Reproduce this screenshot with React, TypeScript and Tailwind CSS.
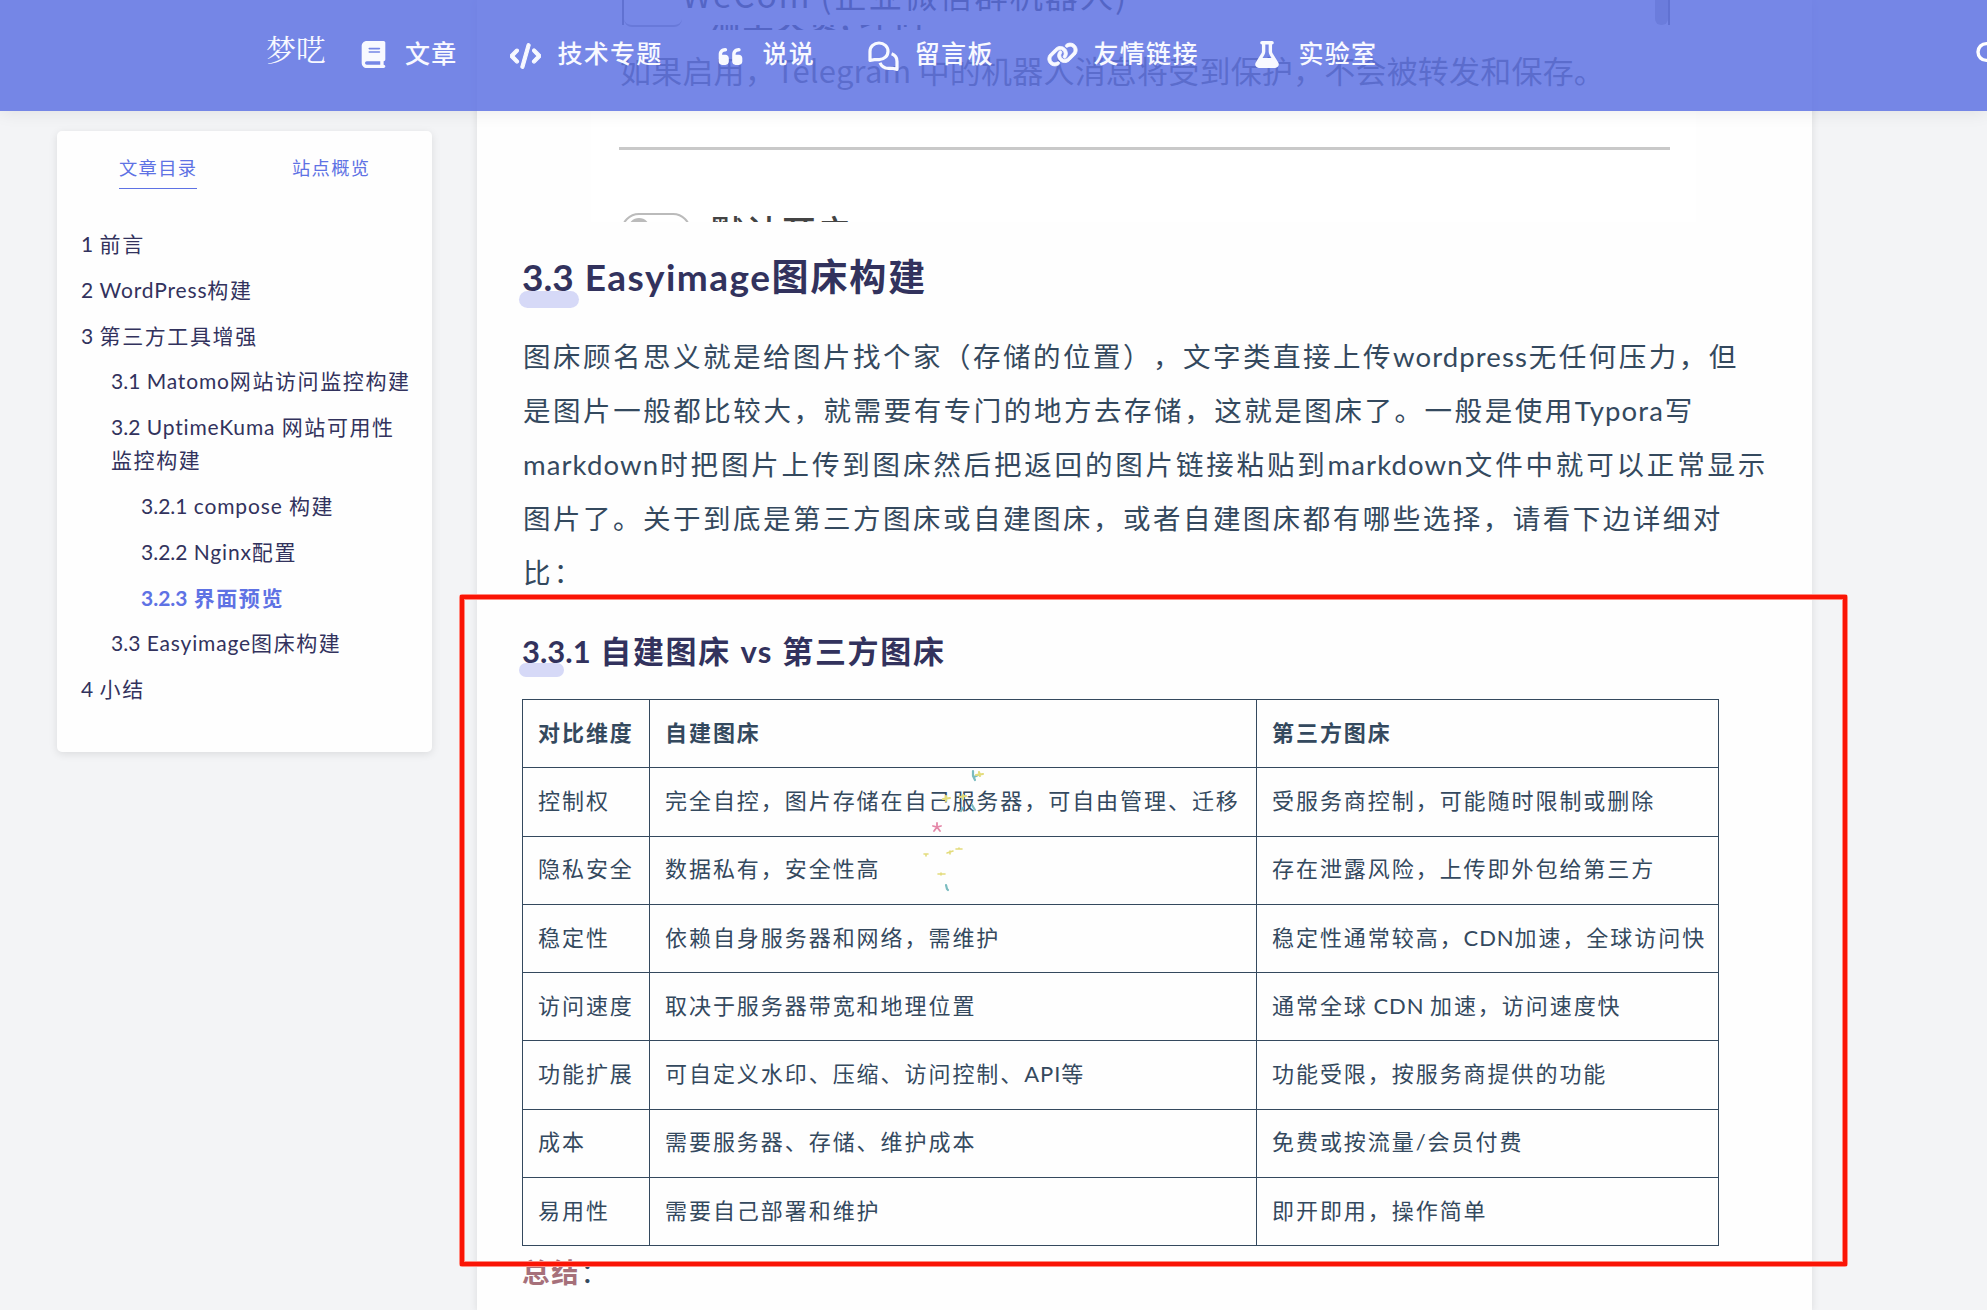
import React from "react";
import { FaBook, FaCode, FaQuoteLeft, FaLink, FaFlask } from "react-icons/fa6";

/** Sets mixed text: Latin words and numbers are tracked tighter than the Chinese around them. */
function Mixed({ text }: { text: string }) {
  const parts = text.split(/([A-Za-z]+|[0-9. ]+)/).filter(Boolean);
  return (
    <>
      {parts.map((p, i) =>
        /^[A-Za-z]/.test(p) ? (
          <span key={i} className="tracking-[0.04em]">{p}</span>
        ) : /^[0-9. ]/.test(p) ? (
          <span key={i} className="tracking-normal">{p}</span>
        ) : (
          p
        )
      )}
    </>
  );
}

function CommentsIcon() {
  return (
    <svg className="mt-[3px]" width="31" height="30" viewBox="0 0 31 30" fill="none" stroke="currentColor" strokeWidth="3.2" strokeLinejoin="round">
      <path d="M2 19.5 V10.5 C2 5.5 6 2 11 2 C16 2 20 5.5 20 10.2 C20 15 16 18.6 11.2 18.6 H6.4 Z" />
      <path d="M23.6 12.8 C27 14 29 17 29 20.4 V28.4 L24.6 27.3 H20.5 C16.4 27.3 13.2 25 12 21.8" />
    </svg>
  );
}

const nav = [
  { label: "文章", icon: <FaBook className="h-[27px] w-[25px]" /> },
  { label: "技术专题", icon: <FaCode className="mt-1 h-[28px] w-[31px]" stroke="currentColor" strokeWidth={22} /> },
  { label: "说说", icon: <FaQuoteLeft className="mt-1 h-[27px] w-[25px]" /> },
  { label: "留言板", icon: <CommentsIcon /> },
  { label: "友情链接", icon: <FaLink className="h-[29px] w-[31px] overflow-visible" stroke="currentColor" strokeWidth={18} /> },
  { label: "实验室", icon: <FaFlask className="h-[27px] w-[24px]" /> },
];

function Header() {
  return (
    <header className="absolute inset-x-0 top-0 z-10 flex h-[111px] items-start overflow-hidden bg-[rgba(96,115,227,0.86)] pt-[28px] pl-[266px] text-[#f8f9ff] shadow-[0_2px_16px_rgba(0,0,0,0.08)]">
      <div className="w-[92px] shrink-0 font-['Noto_Serif_CJK_SC','Noto_Serif_SC','Noto_Sans_CJK_SC',serif] text-[30px] leading-[40px] whitespace-nowrap">梦呓</div>
      <nav className="flex gap-[53.8px] pt-[6px] font-medium">
        {nav.map((n) => (
          <a key={n.label} className="flex h-[40px] items-center gap-[16px] text-[25px] tracking-[1.3px] whitespace-nowrap">
            <span className="flex w-[31px] justify-center">{n.icon}</span>
            <span className="-mr-px">{n.label}</span>
          </a>
        ))}
      </nav>
      <svg className="mt-[13px] ml-auto shrink-0" width="11" height="26" viewBox="0 0 11 26" fill="none" stroke="#fff" strokeWidth="3.4">
        <circle cx="10.4" cy="11" r="8.4" />
      </svg>
    </header>
  );
}

const toc = [
  { t: "1 前言", c: "" },
  { t: "2 WordPress构建", c: "" },
  { t: "3 第三方工具增强", c: "" },
  { t: "3.1 Matomo网站访问监控构建", c: "pl-[30px]" },
  { t: "3.2 UptimeKuma 网站可用性监控构建", c: "pl-[30px]" },
  { t: "3.2.1 compose 构建", c: "pl-[60px]" },
  { t: "3.2.2 Nginx配置", c: "pl-[60px]" },
  { t: "3.2.3 界面预览", c: "pl-[60px] font-bold text-[#5e72e4]" },
  { t: "3.3 Easyimage图床构建", c: "pl-[30px]" },
  { t: "4 小结", c: "" },
];

function Sidebar() {
  return (
    <aside className="mt-[131px] flex h-[621px] w-[375px] shrink-0 flex-col gap-[38px] rounded-[5px] bg-[#fefefe] pt-[19px] shadow-[0_2px_8px_rgba(0,0,0,0.1)]">
      <div className="flex gap-[95px] pl-[62px] text-[18.3px] leading-[37px] tracking-[1.3px] text-[#5e72e4]">
        <span className="h-[39px] w-[78px] border-b border-[#5e72e4] whitespace-nowrap">文章目录</span>
        <span className="whitespace-nowrap">站点概览</span>
      </div>
      <ul className="flex flex-col gap-[12.8px] pr-[18px] pl-[24px] text-[21px] leading-[33px] tracking-[1.6px] [word-spacing:1px] text-[#32325d]">
        {toc.map((i) => (
          <li key={i.t} className={i.c}>
            <Mixed text={i.t} />
          </li>
        ))}
      </ul>
    </aside>
  );
}

function SettingsPreview() {
  return (
    <div className="ml-[114px] flex h-[222px] w-[1105px] flex-col overflow-hidden bg-white pr-[26px] pl-[28px] font-['Noto_Sans_CJK_SC',sans-serif] whitespace-nowrap text-[#444]">
      <div className="ml-[3px] flex h-[25px] shrink-0 justify-between border-x-2 border-[#666]">
        <div className="flex">
          <div className="h-[27px] w-[58px] rounded-b-[8px] border-b-2 border-[#999]" />
          <div className="-mt-[29px] text-[33.5px] leading-[46px] tracking-[1.7px] text-[#111]">WeCom (企业微信群机器人)</div>
        </div>
        <div className="w-[13px] rounded-b-[6px] bg-[#b0b0b0]" />
      </div>
      <div className="flex h-[5px] shrink-0 items-end overflow-hidden pl-[91px] text-[31px] leading-[46px] font-medium tracking-[1.6px] text-[#111]">
        <span className="-mb-[10px]">温工夫贡, 坏何</span>
      </div>
      <p className="mt-[17px] ml-px text-[31px] leading-[46px] tracking-[0.2px]">如果启用，Telegram 中的机器人消息将受到保护，不会被转发和保存。</p>
      <hr className="mt-[54px] h-[3px] shrink-0 border-0 bg-[#c9c9c9]" />
      <div className="mt-[63px] flex items-start gap-[19px] pl-[2px]">
        <div className="flex h-[36px] w-[70px] shrink-0 rounded-full border-2 border-[#bbb] pt-[3px] pl-[5px]">
          <div className="size-[22px] rounded-full bg-[#bbb]" />
        </div>
        <span className="-mt-[8px] text-[35.5px] leading-[52px] font-medium">默认开启</span>
      </div>
    </div>
  );
}

const paragraph = [
  { t: "图床顾名思义就是给图片找个家（存储的位置），文字类直接上传wordpress无任何压力，但", w: "w-[1215px]" },
  { t: "是图片一般都比较大，就需要有专门的地方去存储，这就是图床了。一般是使用Typora写", w: "w-[1171px]" },
  { t: "markdown时把图片上传到图床然后把返回的图片链接粘贴到markdown文件中就可以正常显示", w: "w-[1244px]" },
  { t: "图片了。关于到底是第三方图床或自建图床，或者自建图床都有哪些选择，请看下边详细对", w: "w-[1199px]" },
  { t: "比：", w: "w-[60px]" },
];

const rows = [
  ["控制权", "完全自控，图片存储在自己服务器，可自由管理、迁移", "受服务商控制，可能随时限制或删除"],
  ["隐私安全", "数据私有，安全性高", "存在泄露风险，上传即外包给第三方"],
  ["稳定性", "依赖自身服务器和网络，需维护", "稳定性通常较高，CDN加速，全球访问快"],
  ["访问速度", "取决于服务器带宽和地理位置", "通常全球 CDN 加速，访问速度快"],
  ["功能扩展", "可自定义水印、压缩、访问控制、API等", "功能受限，按服务商提供的功能"],
  ["成本", "需要服务器、存储、维护成本", "免费或按流量/会员付费"],
  ["易用性", "需要自己部署和维护", "即开即用，操作简单"],
];

const cell = "border border-[#34495e] pb-[2px] pl-[15px] text-left whitespace-nowrap";

function Article() {
  return (
    <main className="h-[1310px] w-[1335px] shrink-0 overflow-hidden bg-[#fefefe] shadow-[0_2px_8px_rgba(0,0,0,0.1)]">
      <SettingsPreview />
      <div className="flex flex-col items-start pl-[45px] text-[#34495e]">
        <h2 className="relative isolate mt-[29px] text-[37px] leading-[52px] font-bold tracking-[1.9px] [word-spacing:2px] text-[#32325d]">
          <span className="absolute top-[40px] -left-[3px] -z-10 h-[17px] w-[60px] rounded-full bg-[#d6d9f7]" />
          <Mixed text="3.3 Easyimage图床构建" />
        </h2>
        <div className="mt-[27px] ml-[1px] text-[27.5px] leading-[54px] tracking-[1.7px]">
          {paragraph.map((l) => (
            <p key={l.t} className={`whitespace-nowrap ${l.w} [text-align-last:justify]`}>
              <Mixed text={l.t} />
            </p>
          ))}
        </div>
        <h3 className="relative isolate mt-[28px] text-[31px] leading-[46px] font-bold tracking-[1.7px] [word-spacing:2px] text-[#32325d]">
          <span className="absolute top-[35px] -left-[3px] -z-10 h-[14px] w-[45px] rounded-full bg-[#d6d9f7]" />
          <Mixed text="3.3.1 自建图床 vs 第三方图床" />
        </h3>
        <table className="mt-[25px] w-[1196px] table-fixed border-collapse text-[22px] leading-[30px] tracking-[1.95px]">
          <colgroup>
            <col className="w-[127px]" />
            <col className="w-[607px]" />
            <col className="w-[462px]" />
          </colgroup>
          <tbody>
            <tr className="h-[68.3px] font-bold">
              {["对比维度", "自建图床", "第三方图床"].map((h) => (
                <th key={h} className={cell}>{h}</th>
              ))}
            </tr>
            {rows.map((r) => (
              <tr key={r[0]} className="h-[68.3px]">
                {r.map((c) => (
                  <td key={c} className={cell}>
                    <Mixed text={c} />
                  </td>
                ))}
              </tr>
            ))}
          </tbody>
        </table>
        <p className="text-[27.5px] leading-[54px] tracking-[1.7px]">
          <b className="text-[#a6707a]">总结</b>：
        </p>
      </div>
    </main>
  );
}

function Sparks() {
  return (
    <svg className="absolute top-[765px] left-[915px]" width="80" height="130" viewBox="915 765 80 130" fill="none" strokeWidth="2.2" strokeLinecap="round">
      <g stroke="#7bbcc0">
        <path d="M973 771v5l2 4M974 777l4-2M972 805l3 5M961 811l2-3M946 885l1 4 1 1" />
      </g>
      <g stroke="#e3dc7c">
        <path d="M976 775l7-1M979 772l1 4M943 799l7-1M946 796v5M960 797l6-1M963 795v4" />
        <path d="M924 854h4M926 855v1M947 853l6-2M950 851v3M956 849h6M959 848v1M938 874h7M941 873v2" strokeWidth="1.6" />
      </g>
      <path stroke="#e487a8" d="M937 823v4M933 826l4 1 4-1M937 827l-3 4M937 827l3 4" strokeWidth="1.8" />
    </svg>
  );
}

export default function App() {
  return (
    <div className="relative flex h-[1310px] w-[1987px] items-start gap-[45px] overflow-hidden bg-[#f3f4f6] pl-[57px] font-['Lato','Noto_Sans_CJK_SC',sans-serif] [text-spacing-trim:space-all]">
      <Sidebar />
      <Article />
      <Header />
      <Sparks />
      <div className="absolute top-[594px] left-[459px] z-20 h-[673px] w-[1389px] rounded-[3px] border border-[#ff8a80]">
        <div className="h-full w-full border-4 border-[#fa1405]">
          <div className="h-full w-full border border-[#ff8a80]" />
        </div>
      </div>
    </div>
  );
}
